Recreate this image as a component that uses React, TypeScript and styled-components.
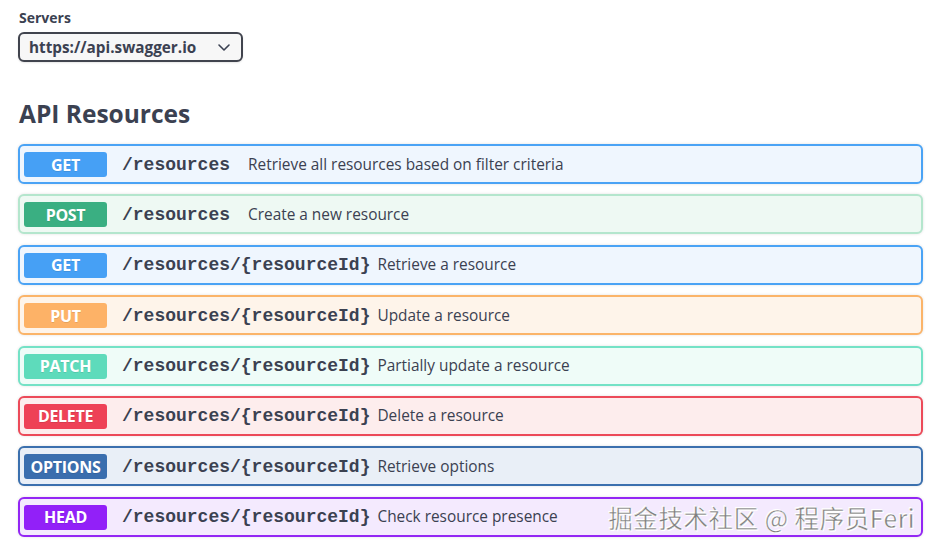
import styled, { createGlobalStyle } from "styled-components";

const GlobalStyle = createGlobalStyle`
  html, body {
    margin: 0;
    padding: 0;
    background: #ffffff;
  }
  body {
    font-family: "Open Sans", "Noto Sans", sans-serif;
    color: #3b4151;
  }
`;

type Method = {
  name: string;
  path: string;
  summary: string;
  border: string;
  badge: string;
  bg: string;
};

const operations: Method[] = [
  {
    name: "GET",
    path: "/resources",
    summary: "Retrieve all resources based on filter criteria",
    border: "#4aa3f5",
    badge: "#46a0f5",
    bg: "#eff6fe",
  },
  {
    name: "POST",
    path: "/resources",
    summary: "Create a new resource",
    border: "#b4e6cd",
    badge: "#3aaf82",
    bg: "#eef9f3",
  },
  {
    name: "GET",
    path: "/resources/{resourceId}",
    summary: "Retrieve a resource",
    border: "#4aa3f5",
    badge: "#46a0f5",
    bg: "#eff6fe",
  },
  {
    name: "PUT",
    path: "/resources/{resourceId}",
    summary: "Update a resource",
    border: "#fbb469",
    badge: "#fdb267",
    bg: "#fef4ea",
  },
  {
    name: "PATCH",
    path: "/resources/{resourceId}",
    summary: "Partially update a resource",
    border: "#74e2c6",
    badge: "#5edbbb",
    bg: "#effcf8",
  },
  {
    name: "DELETE",
    path: "/resources/{resourceId}",
    summary: "Delete a resource",
    border: "#ec4a59",
    badge: "#ee4156",
    bg: "#fdeded",
  },
  {
    name: "OPTIONS",
    path: "/resources/{resourceId}",
    summary: "Retrieve options",
    border: "#3b70ae",
    badge: "#3a6eae",
    bg: "#e9eff7",
  },
  {
    name: "HEAD",
    path: "/resources/{resourceId}",
    summary: "Check resource presence",
    border: "#9326f4",
    badge: "#9220f8",
    bg: "#f4eafe",
  },
];

const Page = styled.div`
  position: relative;
  padding: 8px 9px 0 18px;
  width: 932px;
  height: 550px;
  box-sizing: border-box;
  overflow: hidden;
`;

const ServersLabel = styled.div`
  font-size: 14px;
  font-weight: 700;
  line-height: 19px;
  color: #3b4151;
  margin-left: 1px;
`;

const Select = styled.div`
  margin-top: 5px;
  width: 225px;
  height: 30px;
  box-sizing: border-box;
  border: 2px solid #41444e;
  border-radius: 6px;
  background: #f7f7f7;
  display: flex;
  align-items: center;
  justify-content: space-between;
  padding: 0 9px 0 9px;
  font-size: 15.3px;
  font-weight: 700;
  color: #3b4151;
  box-shadow: 0 1px 2px rgba(0, 0, 0, 0.1);
`;

const Title = styled.h2`
  margin: 36px 0 0 1px;
  font-size: 24.5px;
  font-weight: 700;
  line-height: 32px;
  color: #3b4151;
`;

const List = styled.div`
  margin-top: 14px;
  display: flex;
  flex-direction: column;
  gap: 10.4px;
`;

const Row = styled.div<{ $border: string; $bg: string }>`
  height: 40px;
  box-sizing: border-box;
  border: 2px solid ${(p) => p.$border};
  background: ${(p) => p.$bg};
  border-radius: 6px;
  display: flex;
  align-items: center;
  padding: 0 4px;
  box-shadow: 0 0 3px rgba(0, 0, 0, 0.12);
`;

const Badge = styled.span<{ $color: string }>`
  flex: 0 0 auto;
  width: 83px;
  height: 25px;
  margin-top: 1px;
  border-radius: 3px;
  background: ${(p) => p.$color};
  color: #ffffff;
  font-size: 16px;
  font-weight: 700;
  letter-spacing: -0.3px;
  display: flex;
  align-items: center;
  justify-content: center;
  text-shadow: 0 1px 0 rgba(0, 0, 0, 0.1);
`;

const Path = styled.span`
  min-width: 119px;
  margin: 1px 7px 0 15px;
  font-family: "Liberation Mono", "Courier New", monospace;
  font-size: 18px;
  font-weight: 700;
  color: #3b4151;
  white-space: nowrap;
`;

const Summary = styled.span`
  font-size: 15.4px;
  color: #3b4151;
  white-space: nowrap;
`;

const Watermark = styled.div`
  position: absolute;
  right: 17px;
  bottom: 15px;
  font-family: "Noto Sans CJK SC", "Liberation Sans", sans-serif;
  font-size: 24.6px;
  color: #7e7e7e;
  letter-spacing: 0.5px;
  -webkit-text-stroke: 0.4px #ffffff;
  text-shadow: 0 0 1px #fff, 1px 1px 0 #fff, -1px -1px 0 #fff;
  pointer-events: none;
`;

const Chevron = () => (
  <svg width="16" height="16" viewBox="0 0 16 16" fill="none">
    <path
      d="M3 6l5 5 5-5"
      stroke="#3b4151"
      strokeWidth="1.6"
      strokeLinecap="round"
      strokeLinejoin="round"
    />
  </svg>
);

export default function App() {
  return (
    <Page>
      <GlobalStyle />
      <ServersLabel>Servers</ServersLabel>
      <Select>
        <span>https://api.swagger.io</span>
        <Chevron />
      </Select>
      <Title>API Resources</Title>
      <List>
        {operations.map((op, i) => (
          <Row key={i} $border={op.border} $bg={op.bg}>
            <Badge $color={op.badge}>{op.name}</Badge>
            <Path>{op.path}</Path>
            <Summary>{op.summary}</Summary>
          </Row>
        ))}
      </List>
      <Watermark>掘金技术社区 @ 程序员Feri</Watermark>
    </Page>
  );
}
